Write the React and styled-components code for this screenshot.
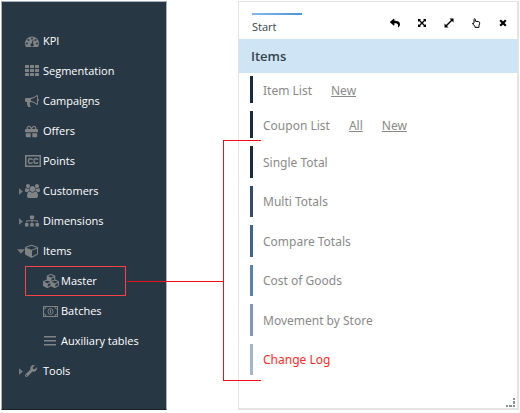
import React from "react";
import styled, { createGlobalStyle } from "styled-components";
import { FaGift, FaSitemap, FaCubes, FaWrench, FaReply } from "react-icons/fa";

const GlobalStyle = createGlobalStyle`
  * { box-sizing: border-box; }
  body { margin: 0; background: #fff; font-family: "Open Sans", "Noto Sans", sans-serif; }
  ul { list-style: none; margin: 0; padding: 0; }
  button { border: 0; padding: 0; background: none; font: inherit; color: inherit; cursor: pointer; }
`;

const Page = styled.div`
  position: relative;
  display: flex;
  gap: 71px;
  min-height: 100vh;
  padding: 1px 1px 3px;
`;

const Sidebar = styled.nav`
  flex: 0 0 166px;
  padding: 24px 0 16px;
  background: #283744;
  border: 1px solid #aab2b9;
  border-bottom-color: #16222d;
`;

const NavRow = styled.li`
  display: flex;
  align-items: center;
  height: 30px;
  padding-left: ${(p) => (p.$nested ? 32 : 14)}px;
`;

const Caret = styled.span`
  display: flex;
  justify-content: ${(p) => (p.$open ? "flex-end" : "center")};
  flex: 0 0 9px;
  color: #75797a;
`;

const NavLink = styled.a`
  display: flex;
  align-items: center;
  gap: 2px;
  color: #fff;
  font-size: 11px;
  font-weight: 500;
  line-height: 16px;
  white-space: nowrap;
  text-decoration: none;
`;

const NavIcon = styled.span`
  display: flex;
  align-items: center;
  width: 16px;
  height: 16px;
  color: #7f8385;
`;

const SelectedRow = styled(NavRow)`
  margin: 0 40px 0 23px;
  padding-left: 8px;
  border: 1px solid #fb4248;
`;

const Panel = styled.main`
  flex: 1;
  display: flex;
  flex-direction: column;
  position: relative;
  min-width: 0;
  border: 1px solid #e3e3e3;
  border-right-width: 2px;
  border-bottom-width: 2px;
`;

const TabBar = styled.header`
  display: flex;
  align-items: flex-start;
  justify-content: space-between;
  height: 37px;
  padding: 11px 9px 0 13px;
`;

const Tab = styled.button`
  width: 50px;
  color: #34434f;
  font-size: 11px;
  font-weight: 500;
  line-height: 16px;
  text-align: left;
  &::before {
    content: "";
    display: block;
    height: 2px;
    margin-bottom: 4px;
    background: linear-gradient(90deg, #86b7ec, #4a93de);
  }
`;

const Tools = styled.div`
  display: flex;
  gap: 17px;
  padding-top: 5px;
`;

const Tool = styled.button`
  display: flex;
  align-items: center;
  justify-content: center;
  width: 10px;
  height: 10px;
  color: #000;
`;

const Heading = styled.h1`
  margin: 0;
  padding: 0 12px;
  background: #cfe5f6;
  color: #34434f;
  font-size: 13px;
  font-weight: 600;
  line-height: 34px;
`;

const Reports = styled.ul`
  flex: 1;
  display: flex;
  flex-direction: column;
  gap: 8px;
  && { padding: 3px 11px 33px; }
`;

const Report = styled.li`
  flex: ${(p) => (p.$compact ? "0 0 27px" : "1 0 27px")};
  display: flex;
  align-items: center;
  gap: 19px;
  padding: 2px 0 0 10px;
  border-left: 3px solid ${(p) => p.$bar};
`;

const ReportLink = styled.a`
  color: ${(p) => (p.$alert ? "#ff2a2a" : "#8a8a8a")};
  font-family: "Noto Sans", "Open Sans", sans-serif;
  font-size: 12px;
  line-height: 18px;
  white-space: nowrap;
  text-decoration: ${(p) => (p.$underlined ? "underline" : "none")};
`;

const ResizeGrip = styled.svg`
  position: absolute;
  right: 1px;
  bottom: 0;
`;

const Connector = styled.div`
  position: absolute;
  left: 223px;
  top: 140px;
  bottom: 32px;
  width: 38px;
  border: 1px solid #f00f18;
  border-right: 0;
  pointer-events: none;
  &::before {
    content: "";
    position: absolute;
    top: 140px;
    right: 100%;
    width: 97px;
    height: 1px;
    background: #f00f18;
  }
`;

const CaretMark = ({ open }) => (
  <svg width={open ? 8 : 4} height={open ? 5 : 7} viewBox={open ? "0 0 9 5" : "0 0 5 8"} aria-hidden="true">
    <path fill="currentColor" d={open ? "M0 0h9L4.500 5z" : "M0 0v8L5 4z"} />
  </svg>
);

const GaugeIcon = () => (
  <svg width="14" height="11" viewBox="0 0 28 22" fill="currentColor" aria-hidden="true">
    <path fillRule="evenodd" d="M14 1a14 14 0 0 0-14 14c0 2.500.700 5 2 7h24c1.300-2 2-4.500 2-7A14 14 0 0 0 14 1zM4 13a2 2 0 1 1 0 4 2 2 0 0 1 0-4zM7 6a2 2 0 1 1 0 4 2 2 0 0 1 0-4zM14 3a2 2 0 1 1 0 4 2 2 0 0 1 0-4zM21 6a2 2 0 1 1 0 4 2 2 0 0 1 0-4zM24 13a2 2 0 1 1 0 4 2 2 0 0 1 0-4zM15.500 8l1.700.500-1.500 6.500a3.200 3.200 0 1 1-2-.300z" />
  </svg>
);

const GridIcon = () => (
  <svg width="14" height="12" viewBox="0 0 14 12" fill="currentColor" aria-hidden="true">
    {[0, 5, 10].map((x) => [0, 4, 8].map((y) => (
      <rect key={`${x}-${y}`} x={x} y={y} width="4" height="3" rx=".5" />
    )))}
  </svg>
);

const HornIcon = () => (
  <svg width="14" height="14" viewBox="0 0 1792 1792" fill="currentColor" aria-hidden="true">
    <path fillRule="evenodd" d="M1664 640q53 0 90.500 37.500t37.500 90.500-37.500 90.500-90.500 37.500v384q0 52-38 90t-90 38q-417-347-812-380-58 19-91 66t-31 100.500 40 92.500q-20 33-23 65.500t6 58 33.500 55 48 50 61.500 50.500q-29 58-111.500 83t-168.500 11.500-132-55.500q-7-23-29.500-87.500t-32-94.500-23-89-15-101 3.500-98.500 22-110.500h-122q-66 0-113-47t-47-113v-192q0-66 47-113t113-47h480q435 0 896-384 52 0 90 38t38 90v384zm-128 604v-954q-394 302-768 343v270q377 42 768 341z" />
  </svg>
);

const CaptionIcon = () => (
  <svg width="16" height="12" viewBox="0 0 16 12" fill="none" stroke="currentColor" aria-hidden="true">
    <rect x=".75" y=".75" width="14.500" height="10.500" strokeWidth="1.500" />
    <path strokeWidth="1.400" d="M7.200 5V4.700Q7.200 3.700 5.800 3.700H5Q3.500 3.700 3.500 5.200V6.800Q3.500 8.300 5 8.300H5.800Q7.200 8.300 7.200 7.300V7M12.700 5V4.700Q12.700 3.700 11.300 3.700H10.500Q9 3.700 9 5.200V6.800Q9 8.300 10.500 8.300H11.300Q12.700 8.300 12.700 7.300V7" />
  </svg>
);

const UsersIcon = () => (
  <svg width="15" height="14" viewBox="0 0 1920 1792" fill="currentColor" aria-hidden="true">
    <path d="M593 896q-162 5-265 128h-134q-82 0-138-40.500t-56-118.500q0-353 124-353 6 0 43.500 21t97.500 42.500 119 21.500q67 0 133-23-5 37-5 66 0 139 81 256zm1071 637q0 120-73 189.500t-194 69.500h-874q-121 0-194-69.500t-73-189.500q0-53 3.500-103.500t14-109 26.500-108.500 43-97.500 62-81 85.500-53.500 111.500-20q10 0 43 21.500t73 48 107 48 135 21.500 135-21.500 107-48 73-48 43-21.500q61 0 111.500 20t85.500 53.500 62 81 43 97.500 26.500 108.500 14 109 3.500 103.500zm-1024-1277q0 106-75 181t-181 75-181-75-75-181 75-181 181-75 181 75 75 181zm704 384q0 159-112.500 271.500t-271.500 112.500-271.500-112.500-112.500-271.500 112.500-271.500 271.500-112.500 271.500 112.500 112.500 271.500zm576 225q0 78-56 118.500t-138 40.500h-134q-103-123-265-128 81-117 81-256 0-29-5-66 66 23 133 23 59 0 119-21.500t97.500-42.500 43.500-21q124 0 124 353zm-128-609q0 106-75 181t-181 75-181-75-75-181 75-181 181-75 181 75 75 181z" />
  </svg>
);

const CubeIcon = () => (
  <svg width="13" height="14" viewBox="0 64 1664 1728" fill="currentColor" aria-hidden="true">
    <path fillRule="evenodd" d="M896 1629l640-349v-636l-640 233v752zm-64-865l698-254-698-254-698 254 698 254zm832-252v768q0 35-18 65t-49 47l-704 384q-28 16-61 16t-61-16l-704-384q-31-17-49-47t-18-65v-768q0-40 23-73t61-50l704-256q22-8 44-8t44 8l704 256q38 17 61 50t23 73z" />
  </svg>
);

const BanknoteIcon = () => (
  <svg width="15" height="11" viewBox="0 0 15 11" fill="none" stroke="currentColor" aria-hidden="true">
    <rect x=".5" y=".5" width="14" height="10" />
    <path d="M1 3Q3 3 3 1M14 3Q12 3 12 1M1 8Q3 8 3 10M14 8Q12 8 12 10" />
    <ellipse cx="7.500" cy="5.500" rx="2.500" ry="3" />
    <path d="M6.800 4.300L7.500 4V7" />
  </svg>
);

const LinesIcon = () => (
  <svg width="13" height="10" viewBox="0 0 13 10" fill="currentColor" aria-hidden="true">
    <path d="M1 0h12v1.500H1zM1 4h12v1.500H1zM1 8h12v1.500H1z" />
  </svg>
);

const FitIcon = () => (
  <svg width="10" height="10" viewBox="0 0 10 10" aria-hidden="true">
    <path d="M1 1h3L1 4zM9 1v3L6 1zM1 9V6l3 3zM9 9H6l3-3z" />
    <path stroke="#000" strokeWidth="1.400" d="M2 2l6 6M8 2L2 8" />
  </svg>
);

const StretchIcon = () => (
  <svg width="10" height="10" viewBox="0 0 10 10" aria-hidden="true">
    <path d="M5.500.500h4v4zM.5 5.500v4h4z" />
    <path stroke="#000" strokeWidth="1.400" d="M8 2L2 8" />
  </svg>
);

const HandIcon = () => (
  <svg width="10" height="10" viewBox="0 0 10 10" fill="none" stroke="#000" strokeLinejoin="round" aria-hidden="true">
    <path d="M3 5V1.300Q3.700.200 4.400 1.300V3.200L7.800 3.700Q8.800 4 8.700 5.200L8 7.600V9.400H4V8.200L1.400 5.700Q1.600 4.500 3 5.500" />
  </svg>
);

const CrossIcon = () => (
  <svg width="8" height="8" viewBox="0 0 8 8" stroke="#000" strokeWidth="2.200" aria-hidden="true">
    <path d="M1.200 1.200l5.600 5.600M6.800 1.200L1.200 6.800" />
  </svg>
);

const NAV = [
  { label: "KPI", icon: <GaugeIcon /> },
  { label: "Segmentation", icon: <GridIcon /> },
  { label: "Campaigns", icon: <HornIcon /> },
  { label: "Offers", icon: <FaGift size={13} /> },
  { label: "Points", icon: <CaptionIcon /> },
  { label: "Customers", icon: <UsersIcon />, branch: true },
  { label: "Dimensions", icon: <FaSitemap size={14} />, branch: true },
  { label: "Items", icon: <CubeIcon />, branch: true, open: true },
  { label: "Master", icon: <FaCubes size={16} />, nested: true, selected: true },
  { label: "Batches", icon: <BanknoteIcon />, nested: true },
  { label: "Auxiliary tables", icon: <LinesIcon />, nested: true },
  { label: "Tools", icon: <FaWrench size={12} />, branch: true },
];

const TOOLS = [
  { label: "Back", icon: <FaReply size={10} /> },
  { label: "Fit", icon: <FitIcon /> },
  { label: "Expand", icon: <StretchIcon /> },
  { label: "Select", icon: <HandIcon /> },
  { label: "Close", icon: <CrossIcon /> },
];

const REPORTS = [
  { label: "Item List", bar: "#1c2b39", actions: ["New"], compact: true },
  { label: "Coupon List", bar: "#1c2b39", actions: ["All", "New"], compact: true },
  { label: "Single Total", bar: "#1c2b39" },
  { label: "Multi Totals", bar: "#324d69" },
  { label: "Compare Totals", bar: "#426589" },
  { label: "Cost of Goods", bar: "#5d82a9" },
  { label: "Movement by Store", bar: "#7d99ba" },
  { label: "Change Log", bar: "#a2b6cd", alert: true },
];

function NavItem({ item }) {
  const Row = item.selected ? SelectedRow : NavRow;
  return (
    <Row $nested={item.nested}>
      <Caret $open={item.open}>{item.branch && <CaretMark open={item.open} />}</Caret>
      <NavLink href="#" aria-current={item.selected ? "page" : undefined}>
        <NavIcon>{item.icon}</NavIcon>
        {item.label}
      </NavLink>
    </Row>
  );
}

export default function App() {
  return (
    <Page>
      <GlobalStyle />
      <Sidebar>
        <ul>{NAV.map((item) => <NavItem key={item.label} item={item} />)}</ul>
      </Sidebar>
      <Panel>
        <TabBar>
          <Tab>Start</Tab>
          <Tools>
            {TOOLS.map((t) => <Tool key={t.label} aria-label={t.label}>{t.icon}</Tool>)}
          </Tools>
        </TabBar>
        <Heading>Items</Heading>
        <Reports>
          {REPORTS.map((r) => (
            <Report key={r.label} $bar={r.bar} $compact={r.compact}>
              <ReportLink href="#" $alert={r.alert}>{r.label}</ReportLink>
              {r.actions?.map((a) => <ReportLink key={a} href="#" $underlined>{a}</ReportLink>)}
            </Report>
          ))}
        </Reports>
        <ResizeGrip width="10" height="10" viewBox="0 0 10 10" fill="#8a8f96" aria-hidden="true">
          <path d="M7 0h2v2H7zM7 3h2v3H7zM0 7h2v2H0zM3 7h3v2H3zM7 7h2v2H7z" />
        </ResizeGrip>
      </Panel>
      <Connector />
    </Page>
  );
}
